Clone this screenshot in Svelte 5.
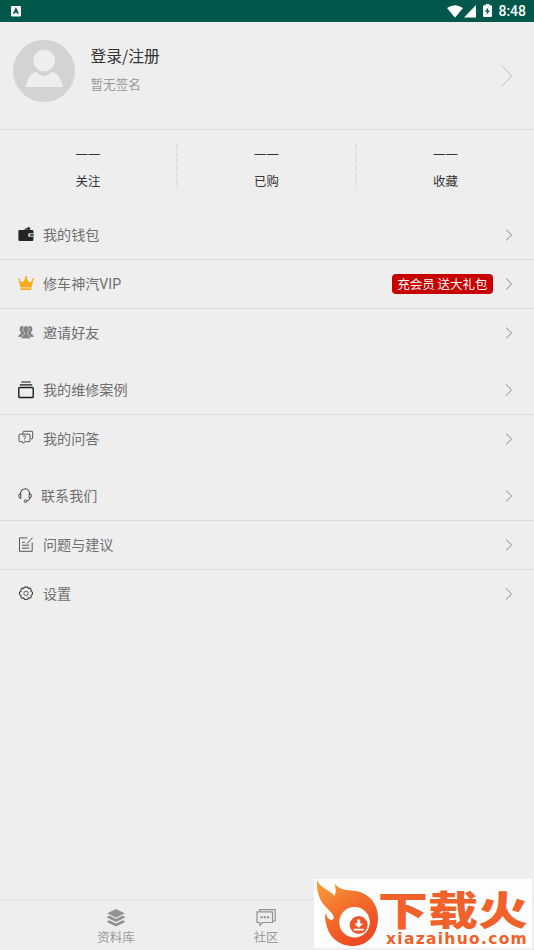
<script>
  const stats = ['关注', '已购', '收藏'];
  const groups = [
    [
      { icon: 'wallet', label: '我的钱包' },
      { icon: 'crown', label: '修车神汽VIP', badge: '充会员 送大礼包' },
      { icon: 'friends', label: '邀请好友' }
    ],
    [
      { icon: 'cases', label: '我的维修案例' },
      { icon: 'answers', label: '我的问答' }
    ],
    [
      { icon: 'headset', label: '联系我们', tight: true },
      { icon: 'note', label: '问题与建议' },
      { icon: 'gear', label: '设置' }
    ]
  ];
</script>

<div class="screen">
  <header class="status">
    <svg class="app-mark" width="10" height="11" viewBox="0 0 10 11">
      <rect width="10" height="10.5" rx="1" fill="#fff" />
      <path d="M2.6 7.8 4.9 2.8 7.2 7.8M3.4 6.1H6.4" fill="none" stroke="#00584a" stroke-width="1.5" />
    </svg>
    <div class="system">
      <svg width="16" height="13" viewBox="0 0 16 13"><path d="M0 3.1Q8-2.7 16 3.1L8 12.8Z" fill="#fff" /></svg>
      <svg class="signal" width="12" height="13" viewBox="0 0 12 13"><path d="M12 0V12.6H0Z" fill="#fff" /></svg>
      <svg class="battery" width="9" height="13" viewBox="0 0 9 13">
        <path d="M1 1.2H2.7V0H6.3V1.2H8Q9 1.2 9 2.2V12Q9 13 8 13H1Q0 13 0 12V2.2Q0 1.2 1 1.2Z" fill="#fff" />
        <path d="M5.5 3 2 7.7H4.2L3.4 11 7 6.4H4.8Z" fill="#00584a" />
      </svg>
      <span>8:48</span>
    </div>
  </header>

  <section class="profile">
    <svg class="avatar" width="62" height="62" viewBox="0 0 62 62">
      <circle cx="31" cy="31" r="31" fill="#d3d3d3" />
      <ellipse cx="31.2" cy="20.5" rx="10.7" ry="10.8" fill="#eee" />
      <path d="M12.8 47Q14.5 34.5 23 31.7Q31 39.8 39.5 31.7Q48 34.5 49.8 47Z" fill="#eee" />
    </svg>
    <div class="identity">
      <div class="name">登录/注册</div>
      <div class="sign">暂无签名</div>
    </div>
    <svg class="big-arrow" width="12" height="22" viewBox="0 0 12 22"><path d="M.8.5 10.6 11 .8 21.3" fill="none" stroke="#bdbdbd" /></svg>
  </section>

  <section class="stats">
    {#each stats as stat, i}
      {#if i}
        <svg class="divider" width="2" height="44" viewBox="0 0 2 44"><path d="M1 0V44" stroke="#dadada" stroke-width="1.6" stroke-dasharray="5.2 1.9" /></svg>
      {/if}
      <div class="stat"><span class="value">一一</span><span class="caption">{stat}</span></div>
    {/each}
  </section>

  <main>
    {#each groups as group}
      <section class="group">
        {#each group as row}
          <div class="row">
            <svg class="icon" width="16" height="18" viewBox="0 0 16 18" fill="none">
              {#if row.icon === 'wallet'}
                <path d="M5.5 3.7 11.2.8 12.8 3.7Z" fill="#242424" />
                <path d="M1.5 4H14.5Q15.4 4 15.4 5V7H11.5Q9.2 7.1 9.2 9T11.5 11H15.4V13.8Q15.4 15 14.2 15H1.6Q.4 15 .4 13.8V5.2Q.4 4 1.5 4Z" fill="#242424" />
                <path d="M9 7.4H15.7V10.6H9Z" fill="#242424" />
                <path d="M15.4 7.4H11.8Q10.1 7.5 10.1 9T11.8 10.6H15.4V9.8H12V8.2H15.4Z" fill="#e4e4e4" />
              {:else if row.icon === 'crown'}
                <path d="M2.5 12.6.7 4.9 4.8 7.5 8 2.3 11.2 7.5 15.3 4.9 13.5 12.6Z" fill="#f8aa17" />
                <path d="M2.6 13.3H13.4V15H2.6Z" fill="#f8aa17" />
                <circle cx="8" cy="2" r="1.1" fill="#f8aa17" /><circle cx="1" cy="4.6" r="1" fill="#f8aa17" /><circle cx="15" cy="4.6" r="1" fill="#f8aa17" />
              {:else if row.icon === 'friends'}
                <g fill="#858585">
                  <ellipse cx="4.2" cy="5.2" rx="2.5" ry="3.2" /><ellipse cx="11.8" cy="5.2" rx="2.5" ry="3.2" />
                  <path d="M.2 13.1Q.3 10.4 3 9.4V7H13V9.4Q15.7 10.4 15.8 13.1Z" />
                  <path d="M3.3 14.7Q3.2 11.4 6.5 10.3V8.8Q4.6 7.2 5 4.4Q5.4 1.8 8 1.8T11 4.4Q11.4 7.2 9.5 8.8V10.3Q12.8 11.4 12.7 14.7Z" stroke="#eee" stroke-width=".6" />
                </g>
              {:else if row.icon === 'cases'}
                <path d="M3.3 1H12.7M1.8 3.8H14.2" stroke="#1c1c1c" stroke-width="1.2" />
                <rect x=".8" y="6.5" width="14.4" height="10" rx=".8" stroke="#1c1c1c" stroke-width="1.4" />
              {:else if row.icon === 'answers'}
                <path d="M5 4V2Q5 1.3 5.7 1.3H14Q14.7 1.3 14.7 2V8Q14.7 8.8 14 8.8H13" stroke="#555" />
                <path d="M1.7 4.2H11.3Q12 4.2 12 5V11Q12 11.7 11.3 11.7H7L5.2 13.3 4.5 11.7H1.7Q1 11.7 1 11V5Q1 4.2 1.7 4.2Z" stroke="#555" />
                <path d="M5.3 6.7Q5.6 5.8 6.6 5.9 8.1 6.1 7.4 7.4L6.5 8.4V9M6.5 9.6V10.4" stroke="#444" stroke-width=".9" />
              {:else if row.icon === 'headset'}
                <path d="M2.5 7.5V6Q3 1.9 7 1.8T11.5 6V7.5M11.5 11.5Q11 14 8.7 14.2" stroke="#444" />
                <path d="M2.8 6.4Q.7 6.6.7 8.9T2.8 11.6ZM11.2 6.4Q13.4 6.6 13.4 8.9T11.2 11.6Z" stroke="#444" />
                <circle cx="7.5" cy="14.2" r="1.3" stroke="#444" />
              {:else if row.icon === 'note'}
                <path d="M9.2 1.9H1.5V15.3H14.2V6.5M9 7.7 14.6 1.6M4 6.3H7M4 9.2H11.3M4 12.1H11.3" stroke="#555" />
              {:else}
                <path d="M6.4 2.1H9.6L10.4 3.6 12.1 3.1 13.2 4.7 12.9 6.2 14.5 7.2V9.4L13 10.4 13.2 12.1 11.8 13.3 10.3 12.9 9.3 14.5H6.7L5.7 12.9 4.2 13.3 2.8 12.1 3 10.4 1.5 9.4V7.2L3.1 6.2 2.8 4.7 3.9 3.1 5.6 3.6Z" stroke="#444" stroke-width="1.1" stroke-linejoin="round" />
                <circle cx="8" cy="8.3" r="2.2" stroke="#666" />
              {/if}
            </svg>
            <span class="label" class:tight={row.tight}>{row.label}</span>
            {#if row.badge}<span class="badge">{row.badge}</span>{/if}
            <svg class="arrow" width="8" height="12" viewBox="0 0 8 12"><path d="M1 .5 6.6 6 1 11.5" fill="none" stroke="#858585" /></svg>
          </div>
        {/each}
      </section>
    {/each}
  </main>

  <nav>
    <div class="tab library">
      <svg width="18" height="18" viewBox="0 0 18 18" fill="#929292">
        <path d="M9 0 17.7 4.2 9 8.7.3 4.2Z" />
        <path d="M.3 7.4 2.4 6.6 9 10 15.6 6.6 17.7 7.4V8.7L9 13 .3 8.7ZM.3 12 2.4 11.2 9 14.5 15.6 11.2 17.7 12V13.3L9 17.5.3 13.3Z" />
      </svg>
      <span>资料库</span>
    </div>
    <div class="tab community">
      <svg width="20" height="18" viewBox="0 0 20 18" fill="none" stroke="#929292" stroke-width="1.2">
        <path d="M3.5 2.5V.7H19.2V12H16.8" />
        <path d="M1 2.8H16.5V13.5H6.7L3.8 16.3V13.5H1Z" />
        <path d="M4.6 8.3H6.8M7.8 8.3H10M11 8.3H13.2" stroke-width="2" />
      </svg>
      <span>社区</span>
    </div>
  </nav>

  <aside class="brand">
    <svg class="flame" width="66" height="69" viewBox="0 0 66 69">
      <defs>
        <linearGradient id="fire" x1="0" y1="0" x2=".55" y2="1"><stop offset="0" stop-color="#f9a13b" /><stop offset=".5" stop-color="#f4702b" /><stop offset="1" stop-color="#ed4a23" /></linearGradient>
      </defs>
      <path d="M3 1C6 9 16 11 20.5 17Q23 12 20.5 5Q26 11 37 11.5C53 12 64 23 64 39C64 56 53 67 39 67C25 67 15 58 12.5 46Q10 39 12 34Q13 41 18 41Q21 40 19 36C15 30 8 26 5 17Q2 9 3 1Z" fill="url(#fire)" />
      <circle cx="40.5" cy="43.2" r="15.3" fill="#fff" />
      <circle cx="44.7" cy="46" r="9" fill="#ee5428" />
      <path d="M43.2 40.5H46.2V44.5H49.2L44.7 48.7 40.2 44.5H43.2ZM39.6 49.8H49.8V51.5H39.6Z" fill="#fff" />
    </svg>
    <div class="wordmark">
      <div class="brand-name">下载火</div>
      <div class="brand-site">xiazaihuo.com</div>
    </div>
  </aside>
</div>

<style>
  .screen {
    position: relative;
    display: flex;
    flex-direction: column;
    width: 534px;
    height: 950px;
    overflow: hidden;
    background: #eee;
    color: #333;
    font-family: 'Noto Sans CJK SC', sans-serif;
  }
  svg { display: block; flex: none; }
  .status {
    display: flex;
    align-items: center;
    justify-content: space-between;
    height: 22px;
    padding: 0 8px 0 11px;
    background: #00584a;
    color: #fff;
    box-sizing: border-box;
  }
  .system { display: flex; align-items: center; font: 500 14px/22px Roboto, sans-serif; }
  .system span { padding-top: 1px; line-height: 21px; }
  .signal { margin-left: 1px; }
  .battery { margin: 0 6px 2px 7px; }
  .profile {
    display: flex;
    height: 89px;
    padding: 18px 21px 0 13px;
    border-bottom: 1px solid #dadada;
  }
  .identity { flex: 1; padding: 4px 0 0 15.5px; }
  .name { font-size: 15.8px; line-height: 24px; }
  .sign { margin-top: 6px; font-size: 12.6px; line-height: 20px; color: #999; }
  .big-arrow { margin-top: 25px; }
  .stats { display: flex; height: 81px; padding-top: 14px; box-sizing: border-box; }
  .stat { flex: 1; display: flex; flex-direction: column; align-items: center; font-size: 12.4px; color: #333; }
  .stat:first-child { flex: 0 0 176px; }
  .value { margin-top: 1px; line-height: 20px; }
  .caption { margin-top: 6px; line-height: 20px; }
  .group + .group { margin-top: 8px; }
  .row {
    display: flex;
    align-items: center;
    height: 49px;
    padding: 0 21px 0 18px;
    border-bottom: 1px solid #dcdcdc;
    box-sizing: border-box;
  }
  .row:last-child { border-color: transparent; }
  .label { flex: 1; margin-left: 9px; font-family: Roboto, 'Noto Sans CJK SC', sans-serif; font-size: 14.1px; line-height: 22px; color: #6e6e6e; }
  .label.tight { margin-left: 7px; }
  .badge { height: 20px; padding: 0 5.5px; margin-right: 12px; border-radius: 4px; background: #c90000; color: #fff; font-size: 12.5px; line-height: 20px; }
  nav { display: flex; height: 51px; margin-top: auto; border-top: 1px solid #e3e3e3; box-sizing: border-box; }
  .tab { display: flex; flex-direction: column; align-items: center; padding-top: 9px; color: #999; font-size: 12.5px; line-height: 18px; }
  .tab span { margin-top: 1px; }
  .library { width: 68px; margin-left: 82px; }
  .community { width: 68px; margin-left: 82px; }
  .brand {
    position: absolute;
    left: 314px;
    top: 879px;
    display: flex;
    width: 218px;
    height: 69px;
    background: #fdfdfd;
    color: #f0622a;
  }
  .wordmark { width: 152px; padding-top: 10px; box-sizing: border-box; }
  .brand-name {
    width: 120px;
    height: 42px;
    margin-left: -2px;
    font-size: 40px;
    font-weight: 900;
    line-height: 38px;
    white-space: nowrap;
    transform: scaleX(1.25);
    transform-origin: left;
  }
  .brand-site { margin-left: 6px; font: 700 15.5px/16px 'DejaVu Sans', sans-serif; letter-spacing: 1.3px; white-space: nowrap; }
</style>
